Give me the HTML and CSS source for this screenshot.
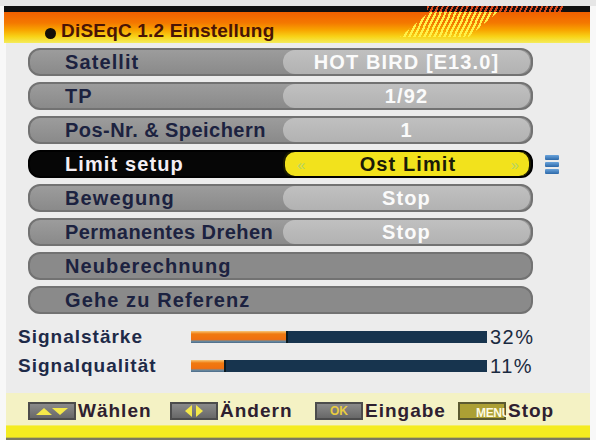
FILE: index.html
```html
<!DOCTYPE html>
<html lang="de">
<head>
<meta charset="utf-8">
<title>DiSEqC 1.2 Einstellung</title>
<link rel="stylesheet" href="styles.css">
</head>
<body>
<div class="screen">
  <div class="topgap"></div>
  <header class="header">
    <div class="hbar"><div class="hbar-stripes"></div></div>
    <div class="hband">
      <span class="dot"></span>
      <span class="title">DiSEqC 1.2 Einstellung</span>
      <div class="hband-stripes"></div>
    </div>
  </header>
  <main class="main">
    <div class="menu">
      <div class="line"><div class="row"><span class="label">Satellit</span><span class="value">HOT BIRD [E13.0]</span></div></div>
      <div class="line"><div class="row"><span class="label">TP</span><span class="value">1/92</span></div></div>
      <div class="line"><div class="row"><span class="label tight">Pos-Nr. &amp; Speichern</span><span class="value">1</span></div></div>
      <div class="line"><div class="row sel"><span class="label">Limit setup</span><span class="value"><span class="arr">&laquo;</span><span class="vtext">Ost Limit</span><span class="arr">&raquo;</span></span></div>
        <span class="scroll"><i></i><i></i><i></i></span></div>
      <div class="line"><div class="row"><span class="label">Bewegung</span><span class="value">Stop</span></div></div>
      <div class="line"><div class="row"><span class="label tight">Permanentes Drehen</span><span class="value">Stop</span></div></div>
      <div class="line"><div class="row plain"><span class="label">Neuberechnung</span></div></div>
      <div class="line"><div class="row plain"><span class="label">Gehe zu Referenz</span></div></div>
    </div>
    <div class="signals">
      <div class="sig"><span class="slabel">Signalstärke</span><span class="bar"><span class="fill" style="width:32%"></span></span><span class="pct">32%</span></div>
      <div class="sig"><span class="slabel">Signalqualität</span><span class="bar"><span class="fill" style="width:11%"></span></span><span class="pct">11%</span></div>
    </div>
  </main>
  <footer class="footer">
    <div class="keys">
      <span class="key"><span class="kicon"><svg width="36" height="12" viewBox="0 0 36 12"><polygon points="2,10 10,3 18,10" fill="#f4e84a"/><polygon points="18,3 34,3 26,10" fill="#f4e84a"/></svg></span><span class="ktext">Wählen</span></span>
      <span class="key"><span class="kicon"><svg width="36" height="14" viewBox="0 0 36 14"><polygon points="16,1 16,13 9,7" fill="#f4e84a"/><polygon points="20,1 20,13 27,7" fill="#f4e84a"/></svg></span><span class="ktext">Ändern</span></span>
      <span class="key"><span class="kicon"><span class="ktag ok">OK</span></span><span class="ktext">Eingabe</span></span>
      <span class="key"><span class="kicon menu"><span class="ktag mn">MENU</span></span><span class="ktext">Stop</span></span>
    </div>
  </footer>
</div>
</body>
</html>
```

FILE: styles.css
```css
html, body {
  margin: 0;
  padding: 0;
}
body {
  width: 596px;
  height: 440px;
  background: #f8f8f8;
  overflow: hidden;
  font-family: "Liberation Sans", Arial, sans-serif;
  font-weight: bold;
}
.screen {
  display: flex;
  flex-direction: column;
  width: 596px;
  height: 440px;
}
.topgap {
  height: 6px;
  background: #e6e6e6;
}
.header {
  margin: 0 6px 0 4px;
  display: flex;
  flex-direction: column;
}
.hbar {
  position: relative;
  height: 6px;
  background: #101010;
}
.hbar-stripes {
  position: absolute;
  left: 423px;
  top: 0;
  width: 136px;
  height: 6px;
  background: repeating-linear-gradient(115deg, #d8481c 0 2px, #181010 2px 4.5px);
}
.hband {
  position: relative;
  height: 31px;
  display: flex;
  align-items: flex-end;
  background: linear-gradient(180deg, #f06000 0%, #f47800 35%, #f8a400 58%, #f8d418 80%, #f4ec5c 100%);
}
.hband-stripes {
  position: absolute;
  left: 396px;
  top: 0;
  width: 98px;
  height: 25px;
  background: repeating-linear-gradient(115deg, #fff24a 0 2.2px, rgba(0,0,0,0) 2.2px 4.5px);
  clip-path: polygon(30% 0, 100% 0, 70% 100%, 0 100%);
}
.dot {
  width: 11px;
  height: 11px;
  border-radius: 50%;
  background: #141008;
  margin: 0 5px 4px 41px;
}
.title {
  font-size: 19px;
  line-height: 22px;
  color: #4a1406;
  padding-bottom: 1px;
  letter-spacing: 0.2px;
}
.main {
  flex: 1;
  margin: 0 6px 0 6px;
  background: #ececec;
  display: flex;
  flex-direction: column;
}
.menu {
  display: flex;
  flex-direction: column;
  gap: 6px;
  padding: 5px 0 0 22px;
}
.line {
  display: flex;
  align-items: center;
}
.row {
  box-sizing: border-box;
  width: 505px;
  height: 28px;
  border-radius: 12px;
  border: 2px solid #727272;
  background: linear-gradient(180deg, #9c9c9c 0%, #8a8a8a 100%);
  display: flex;
  align-items: center;
  overflow: hidden;
}
.label {
  box-sizing: border-box;
  width: 253px;
  flex: none;
  padding-left: 35px;
  font-size: 20px;
  color: #1c2240;
  white-space: nowrap;
  overflow: hidden;
  letter-spacing: 1.1px;
}
.label.tight {
  letter-spacing: 0.45px;
}
.value {
  flex: 1;
  align-self: stretch;
  margin: 0 1px 0 0;
  border-radius: 12px;
  background: linear-gradient(180deg, #c0c0c0 0%, #b2b2b2 100%);
  color: #fbfbfb;
  font-size: 20px;
  display: flex;
  align-items: center;
  justify-content: center;
  letter-spacing: 1.1px;
}
.row.plain {
  background: #8a8a8a;
}
.row.sel {
  background: #060606;
  border-color: #000;
}
.row.sel .label {
  color: #f4eef4;
}
.row.sel .value {
  background: #f2e21c;
  border: 2px solid #1a1a00;
  margin: -2px 0 -2px 0;
  justify-content: space-between;
  padding: 0 10px 0 12px;
  color: #1a1a08;
}
.arr {
  color: #b4d468;
  font-size: 15px;
  font-weight: normal;
  letter-spacing: 0;
}
.vtext {
  font-size: 20px;
}
.scroll {
  margin-left: 12px;
  display: flex;
  flex-direction: column;
  gap: 2px;
}
.scroll i {
  display: block;
  width: 14px;
  height: 5px;
  background: linear-gradient(180deg, #6aa4dc, #2c68a8);
  border-radius: 1px;
}
.signals {
  display: flex;
  flex-direction: column;
  gap: 7px;
  padding: 12px 0 0 12px;
}
.sig {
  display: flex;
  align-items: center;
  height: 22px;
}
.slabel {
  width: 173px;
  font-size: 19px;
  color: #1e2a48;
  letter-spacing: 1px;
}
.bar {
  width: 296px;
  height: 12px;
  background: #17344e;
  display: flex;
}
.fill {
  display: block;
  height: 12px;
  background: linear-gradient(180deg, #f8c878 0%, #f07a10 25%, #f07010 70%, #6a8aa0 85%, #4a6a88 100%);
  border-right: 2px solid #0a1a20;
}
.pct {
  margin-left: 3px;
  font-size: 20px;
  font-weight: normal;
  color: #1a2a40;
  letter-spacing: 1.5px;
}
.footer {
  height: 47px;
  margin: 0 6px 0 6px;
  display: flex;
  flex-direction: column;
  background: linear-gradient(180deg, #f4f2c4 0%, #f4f2c4 68%, #f4ec20 70%, #f4ec20 94%, #7a7a60 96%, #7a7a60 100%);
}
.keys {
  display: grid;
  grid-template-columns: 142px 145px 143px auto;
  align-items: center;
  padding: 7px 0 0 22px;
}
.key {
  display: flex;
  align-items: center;
  gap: 2px;
}
.kicon {
  box-sizing: border-box;
  width: 48px;
  height: 18px;
  background: linear-gradient(180deg, #8a8a8a, #686868);
  border: 2px solid #4c4c4c;
  display: flex;
  align-items: center;
  justify-content: center;
}
.kicon.menu {
  background: #aca034;
  border-color: #5c5a30;
}
.ktag {
  display: block;
  font-size: 12px;
  line-height: 13px;
  font-weight: bold;
}
.ktag.ok {
  color: #e8cc40;
}
.ktag.mn {
  color: #fffbe0;
  letter-spacing: -0.3px;
}
.ktext {
  font-size: 19px;
  color: #2e2030;
  letter-spacing: 1px;
}
```
